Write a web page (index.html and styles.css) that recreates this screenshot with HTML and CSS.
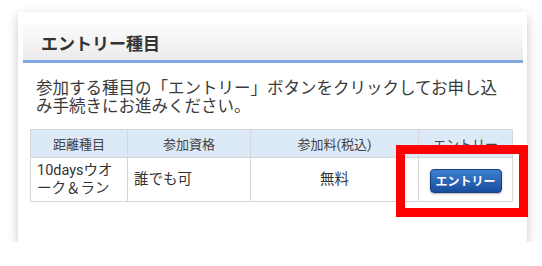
FILE: index.html
```html
<!DOCTYPE html>
<html lang="ja">
<head>
<meta charset="UTF-8">
<meta name="viewport" content="width=device-width, initial-scale=1.0">
<title>エントリー種目</title>
<link rel="stylesheet" href="styles.css">
</head>
<body>
  <div class="card">
    <h2 class="section-title">エントリー種目</h2>
    <p class="lead">参加する種目の「エントリー」ボタンをクリックしてお申し込み手続きにお進みください。</p>
    <table class="entry-table">
      <tr>
        <th class="col-dist">距離種目</th>
        <th class="col-qual">参加資格</th>
        <th class="col-fee">参加料(税込)</th>
        <th class="col-entry">エントリー</th>
      </tr>
      <tr>
        <td class="left">10daysウオーク＆ラン</td>
        <td class="left">誰でも可</td>
        <td class="center">無料</td>
        <td class="center"><button class="entry-btn">エントリー</button></td>
      </tr>
    </table>
  </div>
  <div class="highlight"></div>
</body>
</html>
```

FILE: styles.css
```css
body {
  margin: 0;
  background-color: #fff;
  font-family: Roboto, "Noto Sans CJK JP", sans-serif;
  color: #333;
}
.card {
  margin: 12px 0 0 18px;
  width: 500px;
  height: 218px;
  padding: 12px 4px 0 5px;
  background-color: #fff;
  border-radius: 2px;
  box-shadow: 0 4px 12px rgba(0,0,0,0.22);
}
.section-title {
  margin: 0;
  height: 36px;
  padding: 0 0 0 18px;
  line-height: 40px;
  font-size: 17px;
  font-weight: bold;
  color: #333;
  background: linear-gradient(#fcfcfc, #ebebeb);
  border-bottom: 3px solid #80aade;
}
.lead {
  margin: 17px 0 0 13px;
  width: 472px;
  font-size: 16.5px;
  line-height: 18px;
  color: #3a3a3a;
}
.entry-table {
  margin: 13px 0 0 7px;
  width: 483px;
  border-collapse: collapse;
  font-size: 14.5px;
}
.entry-table th,
.entry-table td {
  border: 1px solid #d6d6d6;
  padding: 0 6px;
}
.entry-table th {
  height: 27px;
  background-color: #dce9f6;
  font-size: 13px;
  font-weight: normal;
  color: #444;
  text-align: center;
}
.entry-table td {
  height: 43px;
  line-height: 18px;
  color: #333;
}
.col-dist { width: 84px; }
.col-qual { width: 110px; }
.col-fee { width: 155px; }
.left { text-align: left; }
.center { text-align: center; }
.entry-btn {
  width: 72px;
  height: 24px;
  padding: 0;
  margin-top: 2px;
  border: 1px solid #17407f;
  border-radius: 4px;
  background: linear-gradient(#3d80d2, #1a4c9c);
  color: #fff;
  font-family: "Noto Sans CJK JP", sans-serif;
  font-size: 12px;
  font-weight: bold;
  box-shadow: 0 1px 2px rgba(0,0,0,0.3);
}
.highlight {
  position: absolute;
  left: 396px;
  top: 145px;
  width: 114px;
  height: 54px;
  border: 9px solid #ff0000;
}
```
